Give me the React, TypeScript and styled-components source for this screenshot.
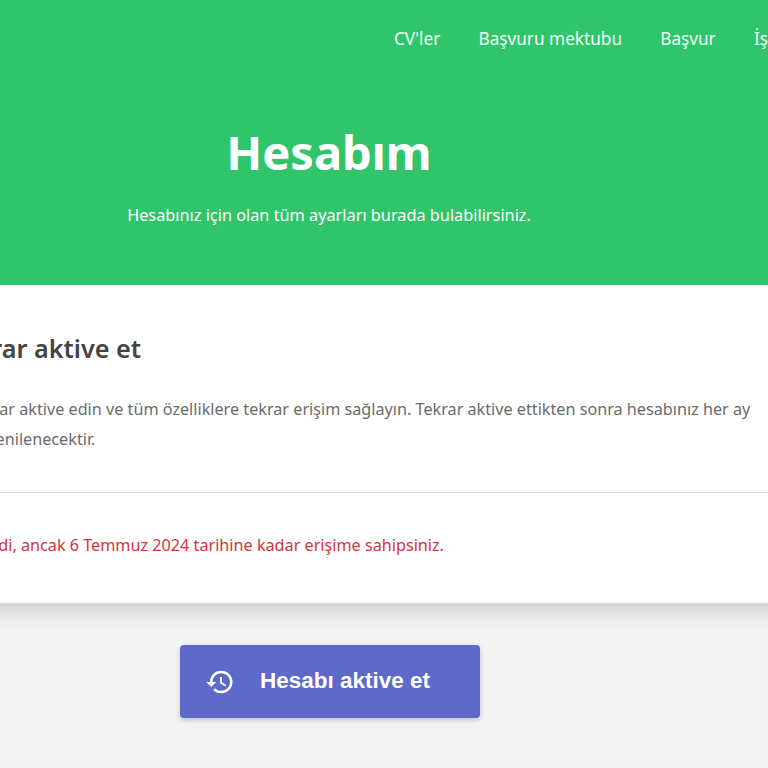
import React from "react";
import styled, { createGlobalStyle } from "styled-components";
import { MdHistory } from "react-icons/md";

const GlobalStyle = createGlobalStyle`
  html, body {
    margin: 0;
    padding: 0;
    background: #f3f3f3;
  }
  body {
    font-family: "Noto Sans", "Open Sans", sans-serif;
  }
`;

export default function App() {
  return (
    <Page>
      <GlobalStyle />
      <Hero>
        <Nav>
          <NavLink>CV'ler</NavLink>
          <NavLink>Başvuru mektubu</NavLink>
          <NavLink>Başvur</NavLink>
          <NavLink>İşler</NavLink>
        </Nav>
        <HeroText>
          <Title>Hesabım</Title>
          <Subtitle>Hesabınız için olan tüm ayarları burada bulabilirsiniz.</Subtitle>
        </HeroText>
      </Hero>
      <Card>
        <CardHead>
          <CardTitle>Hesabını tekrar aktive et</CardTitle>
          <CardText>
            Hesabınızı tekrar aktive edin ve tüm özelliklere tekrar erişim sağlayın. Tekrar aktive ettikten sonra hesabınız her ay
            <br />
            tek otomatik yenilenecektir.
          </CardText>
        </CardHead>
        <CardFoot>
          <Warning>Üyelik iptal edildi, ancak 6 Temmuz 2024 tarihine kadar erişime sahipsiniz.</Warning>
        </CardFoot>
      </Card>
      <Actions>
        <ActivateButton>
          <MdHistory size={30} />
          <span>Hesabı aktive et</span>
        </ActivateButton>
      </Actions>
    </Page>
  );
}

const Page = styled.div`
  width: 768px;
  height: 768px;
  overflow: hidden;
  background: #f3f3f3;
`;

const Hero = styled.header`
  position: relative;
  z-index: 1;
  height: 285px;
  background: #31c56b;
  color: #fff;
  overflow: hidden;
`;

const Nav = styled.nav`
  display: flex;
  gap: 38.2px;
  padding: 27px 0 0 394px;
  white-space: nowrap;
`;

const NavLink = styled.a`
  font-size: 17.2px;
  line-height: 24px;
  color: #f2fff6;
`;

const HeroText = styled.div`
  width: 658px;
  display: flex;
  flex-direction: column;
  align-items: center;
  padding-top: 73px;
`;

const Title = styled.h1`
  margin: 0;
  font-size: 47px;
  line-height: 56px;
  font-weight: 700;
`;

const Subtitle = styled.p`
  margin: 23px 0 0;
  font-size: 16.3px;
  line-height: 24px;
`;

const Card = styled.section`
  width: 960px;
  margin-left: -113px;
  background: #fff;
  box-shadow: 0 6px 24px rgba(0, 0, 0, 0.18);
  white-space: nowrap;
`;

const CardHead = styled.div`
  height: 208px;
  padding: 47px 0 0 0;
  box-sizing: border-box;
  border-bottom: 1px solid #d9d9d9;
`;

const CardTitle = styled.h2`
  margin: 0 0 0 -49px;
  font-size: 25.2px;
  line-height: 32px;
  font-weight: 600;
  color: #444;
`;

const CardText = styled.p`
  margin: 30px 0 0;
  font-size: 16.2px;
  line-height: 30px;
  color: #6b6b6b;
`;

const CardFoot = styled.div`
  height: 110px;
  padding-top: 38px;
  box-sizing: border-box;
`;

const Warning = styled.p`
  margin: 0 0 0 -4px;
  font-size: 16.2px;
  line-height: 28px;
  color: #d5333b;
`;

const Actions = styled.div`
  width: 660px;
  display: flex;
  justify-content: center;
  padding-top: 42px;
`;

const ActivateButton = styled.button`
  width: 300px;
  height: 73px;
  display: flex;
  align-items: center;
  gap: 25px;
  padding: 0 0 0 25px;
  border: none;
  border-radius: 4px;
  background: #5e6ac9;
  color: #fff;
  font-family: "Liberation Sans", Arial, sans-serif;
  font-size: 22.5px;
  font-weight: 700;
  box-shadow: 0 2px 5px rgba(0, 0, 0, 0.2);

  span {
    margin-top: -2px;
  }
`;
